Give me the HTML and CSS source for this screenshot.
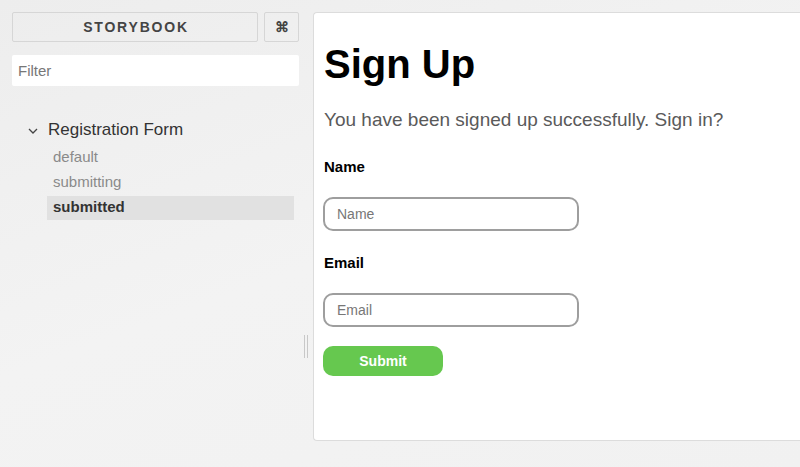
FILE: index.html
```html
<!DOCTYPE html>
<html>
<head>
<meta charset="utf-8">
<link rel="stylesheet" href="styles.css">
</head>
<body>
<div class="app">
  <aside class="sidebar">
    <div class="header">
      <div class="brand">STORYBOOK</div>
      <div class="shortcut">⌘</div>
    </div>
    <div class="filter">Filter</div>
    <ul class="tree">
      <li class="kind">
        <svg class="chev" width="10" height="6" viewBox="0 0 10 6"><path d="M1 1l4 4 4-4" fill="none" stroke="#444" stroke-width="1.3"/></svg>
        <span>Registration Form</span>
      </li>
      <li class="story">default</li>
      <li class="story">submitting</li>
      <li class="story active">submitted</li>
    </ul>
  </aside>
  <div class="handle"><span></span><span></span></div>
  <main class="preview">
    <h1 class="title">Sign Up</h1>
    <p class="lead">You have been signed up successfully. Sign in?</p>
    <label class="label first">Name</label>
    <div class="input">Name</div>
    <label class="label">Email</label>
    <div class="input">Email</div>
    <div class="submit">Submit</div>
  </main>
</div>
</body>
</html>
```

FILE: styles.css
```css
html, body {
  margin: 0;
  padding: 0;
}
body {
  width: 800px;
  height: 467px;
  overflow: hidden;
  background: linear-gradient(160deg, #ededed 0%, #f3f3f3 50%, #f1f1f1 100%);
  font-family: "Liberation Sans", Arial, sans-serif;
}
.app {
  display: flex;
  padding: 12px 0 0 12px;
  height: 429px;
}
.sidebar {
  width: 287px;
  flex: none;
}
.header {
  display: flex;
  gap: 6px;
  height: 30px;
}
.brand {
  width: 246px;
  border: 1px solid #d6d6d6;
  border-radius: 2px;
  display: flex;
  align-items: center;
  justify-content: center;
  font-size: 14px;
  font-weight: bold;
  letter-spacing: 1.8px;
  color: #444;
  padding-left: 2px;
  box-sizing: border-box;
}
.shortcut {
  width: 35px;
  border: 1px solid #d6d6d6;
  border-radius: 2px;
  display: flex;
  align-items: center;
  justify-content: center;
  font-size: 14px;
  font-weight: bold;
  color: #444;
  box-sizing: border-box;
}
.filter {
  margin-top: 13px;
  height: 31px;
  background: #fff;
  border-radius: 2px;
  font-size: 15px;
  color: #777;
  line-height: 31px;
  padding-left: 6px;
}
.tree {
  list-style: none;
  margin: 29px 0 0 0;
  padding: 0;
}
.kind {
  display: flex;
  align-items: center;
  height: 29px;
  font-size: 17px;
  color: #333;
  padding-left: 16px;
}
.chev {
  margin-right: 10px;
  margin-top: 2px;
}
.story {
  margin-left: 35px;
  width: 247px;
  height: 25px;
  line-height: 25px;
  padding-left: 6px;
  box-sizing: border-box;
  font-size: 15px;
  color: #8a8a8a;
}
.story.active {
  margin-top: 2px;
  background: #e1e1e1;
  color: #333;
  font-weight: bold;
  height: 24px;
  line-height: 22px;
}
.handle {
  width: 14px;
  flex: none;
  display: flex;
  justify-content: center;
  align-items: flex-start;
  gap: 2px;
  padding-top: 323px;
  box-sizing: border-box;
}
.handle span {
  width: 1px;
  height: 23px;
  background: #c8c8c8;
}
.preview {
  flex: 1;
  background: #fff;
  border: 1px solid #dcdcdc;
  border-right: none;
  border-radius: 4px 0 0 4px;
  padding: 0 0 0 10px;
  box-sizing: border-box;
  height: 429px;
}
.title {
  margin: 28px 0 0 0;
  font-size: 40px;
  font-weight: bold;
  line-height: 46px;
  color: #000;
}
.lead {
  margin: 21px 0 0 0;
  font-size: 19px;
  line-height: 24px;
  color: #5a5a5a;
}
.label {
  display: block;
  margin-top: 23px;
  font-size: 15px;
  font-weight: bold;
  line-height: 18px;
  color: #000;
}
.label.first {
  margin-top: 26px;
}
.input {
  margin-top: 21px;
  width: 256px;
  height: 34px;
  border: 2px solid #9e9e9e;
  border-radius: 10px;
  box-sizing: border-box;
  padding-left: 12px;
  line-height: 30px;
  font-size: 14px;
  color: #777;
  margin-left: -1px;
}
.submit {
  margin-top: 19px;
  margin-left: -1px;
  width: 120px;
  height: 30px;
  border-radius: 10px;
  background: #66c84f;
  color: #fff;
  font-size: 14px;
  font-weight: bold;
  display: flex;
  align-items: center;
  justify-content: center;
}
```
